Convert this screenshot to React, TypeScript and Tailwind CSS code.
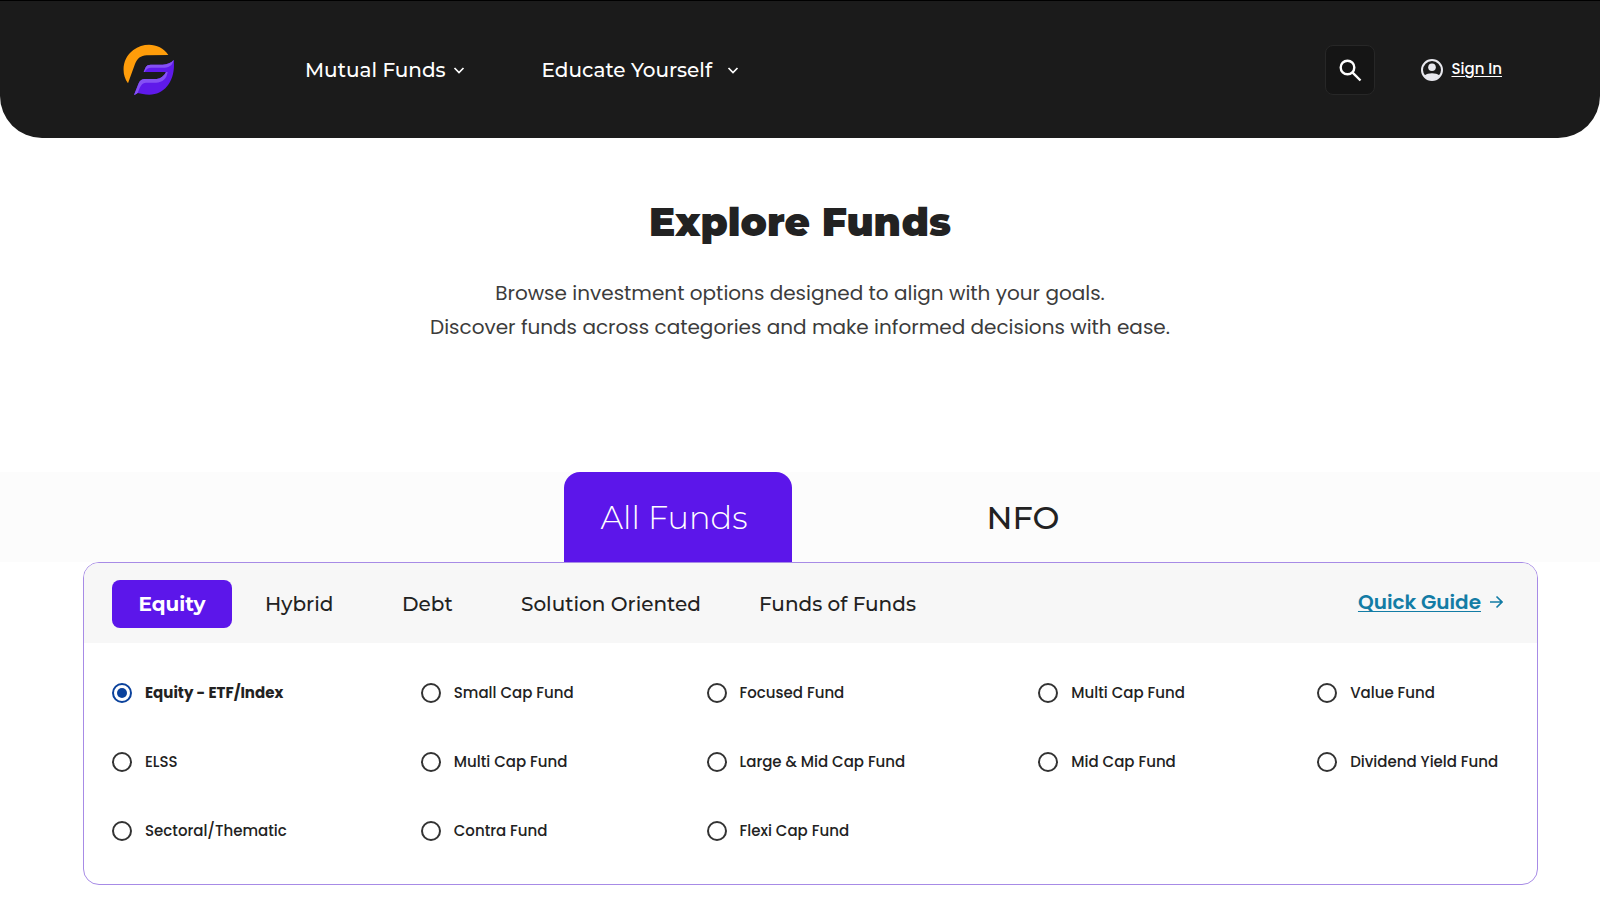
import React, { useState } from "react";

const navFont = "font-['Montserrat','Inter',sans-serif]";

const categories = [
  { name: "Equity", box: "w-[120px] justify-center mr-[33px]" },
  { name: "Hybrid", box: "w-[137px]" },
  { name: "Debt", box: "w-[119px]" },
  { name: "Solution Oriented", box: "w-[238px]" },
  { name: "Funds of Funds", box: "" },
];

const funds = [
  "Equity - ETF/Index",
  "Small Cap Fund",
  "Focused Fund",
  "Multi Cap Fund",
  "Value Fund",
  "ELSS",
  "Multi Cap Fund",
  "Large & Mid Cap Fund",
  "Mid Cap Fund",
  "Dividend Yield Fund",
  "Sectoral/Thematic",
  "Contra Fund",
  "Flexi Cap Fund",
];

function Logo() {
  return (
    <svg viewBox="66 39 159 159" className="size-[53px]" aria-hidden="true">
      <path
        d="M84 160C62 130 67 84 100 60C134 35 182 40 205 75L140 76C122 77 112 85 105 102Z"
        fill="#ff9d0a"
      />
      <path
        d="M102 195L116 160C120 150 126 147 134 147L170 147C184 145 193 137 198 126L131 126L137 112C140 106 145 104 152 104L188 104C203 103 213 99 221 90C228 148 196 194 148 194C134 194 122 190 113 189C109 192 106 194 102 195Z"
        fill="#5f1aea"
      />
      <path
        d="M131 126L137 112C140 106 145 104 152 104L188 104C203 103 213 99 221 90C218 104 210 112 194 113L154 113C144 113 138 117 134 126Z"
        fill="#8450f4"
      />
      <path
        d="M102 195L116 160C120 150 126 147 134 147L170 147C184 145 193 137 198 126L203 126C200 146 188 157 168 158L138 158C125 159 121 168 113 189C109 192 106 194 102 195Z"
        fill="#8450f4"
      />
    </svg>
  );
}

function Chevron() {
  return (
    <svg viewBox="0 0 12 12" className="size-3" fill="none" stroke="currentColor" strokeWidth="1.7" aria-hidden="true">
      <path d="M1.5 4L6 8.5L10.5 4" />
    </svg>
  );
}

export default function App() {
  const [tab, setTab] = useState("All Funds");
  const [category, setCategory] = useState("Equity");
  const [fund, setFund] = useState(0);

  return (
    <div className="min-h-screen bg-white font-['Poppins','Inter',sans-serif] text-[#222]">
      <header className="flex h-[138px] items-center rounded-b-[42px] border-t border-black bg-[#1b1b1b] pr-[98px] pl-[122px] text-white">
        <a href="#home" aria-label="Home">
          <Logo />
        </a>
        <nav className={`ml-[130px] flex items-center gap-[77px] text-[20px] font-medium ${navFont}`}>
          <button className="flex items-center gap-[7px]">
            Mutual Funds <Chevron />
          </button>
          <button className="flex items-center gap-[15px]">
            Educate Yourself <Chevron />
          </button>
        </nav>
        <div className="ml-auto flex items-center gap-[46px]">
          <button
            aria-label="Search"
            className="flex size-[50px] items-center justify-center rounded-lg border border-[#272727] bg-[#151515]"
          >
            <svg viewBox="0 0 24 24" className="size-6" fill="none" stroke="currentColor" strokeWidth="2.4" aria-hidden="true">
              <circle cx="9.5" cy="9.5" r="6.8" />
              <path d="M14.4 14.4L22.5 22.5" />
            </svg>
          </button>
          <a href="#signin" className="flex items-center gap-2 text-[15px] font-medium">
            <svg viewBox="0 0 22 22" className="size-[22px]" aria-hidden="true">
              <circle cx="11" cy="11" r="10" fill="none" stroke="#e8e8ee" strokeWidth="2" />
              <circle cx="11" cy="8.2" r="3.8" fill="#e8e8ee" />
              <path d="M3.5 16.5C7 13.4 15 13.4 18.5 16.5C16 21.8 6 21.8 3.5 16.5Z" fill="#e8e8ee" />
            </svg>
            <span className="underline decoration-1 underline-offset-2">Sign In</span>
          </a>
        </div>
      </header>

      <main>
        <section className="px-8 pt-[59px] text-center">
          <h1 className={`text-[39px] leading-[50px] font-black ${navFont}`}>Explore Funds</h1>
          <p className="mt-[29px] text-[20px] leading-[34px] text-[#3c3c3c]">
            Browse investment options designed to align with your goals.
            <br />
            Discover funds across categories and make informed decisions with ease.
          </p>
        </section>

        <div className={`mt-[128px] flex justify-center gap-[117px] bg-[#fcfcfc] pl-[101px] text-[32px] ${navFont}`} role="tablist">
          {["All Funds", "NFO"].map((name) => (
            <button
              key={name}
              role="tab"
              aria-selected={tab === name}
              onClick={() => setTab(name)}
              className={`h-[90px] w-[228px] rounded-t-2xl pt-[2px] ${tab === name ? "bg-[#5c16ea] pr-2 font-light text-white" : "font-medium"}`}
            >
              {name}
            </button>
          ))}
        </div>

        <section className="mr-[62px] ml-[83px] overflow-hidden rounded-2xl border border-[#a78be6]">
          <div className="flex h-20 items-center justify-between bg-[#f7f7f7] pr-[34px] pl-7">
            <div className={`flex items-center pt-[2px] text-[20px] font-medium ${navFont}`}>
              {categories.map(({ name, box }) => (
                <button
                  key={name}
                  onClick={() => setCategory(name)}
                  className={`flex h-12 items-center rounded-lg whitespace-nowrap ${box} ${category === name ? "bg-[#5c16ea] font-bold text-white" : ""}`}
                >
                  {name}
                </button>
              ))}
            </div>
            <a href="#guide" className="flex items-center gap-2 pb-[2px] text-[20px] font-semibold text-[#137ca5]">
              <span className="underline decoration-1 underline-offset-2">Quick Guide</span>
              <svg viewBox="0 0 14 14" className="size-3.5" fill="none" stroke="currentColor" strokeWidth="1.6" aria-hidden="true">
                <path d="M1 7H13M7.5 1.5L13 7L7.5 12.5" />
              </svg>
            </a>
          </div>
          <div className="grid grid-cols-[309fr_286fr_332fr_279fr_192fr] gap-y-[45px] px-7 pt-[38px] pb-[41px]">
            {funds.map((name, i) => (
              <label
                key={i}
                className={`flex h-6 items-center gap-[13px] text-[15px] whitespace-nowrap ${fund === i ? "font-bold" : "font-medium"}`}
              >
                <input
                  type="radio"
                  name="fund"
                  checked={fund === i}
                  onChange={() => setFund(i)}
                  className="size-5 shrink-0 appearance-none rounded-full border-2 border-[#333] bg-white bg-clip-content p-[3px] checked:border-[#0b429c] checked:bg-[#0b429c]"
                />
                {name}
              </label>
            ))}
          </div>
        </section>
      </main>
    </div>
  );
}
